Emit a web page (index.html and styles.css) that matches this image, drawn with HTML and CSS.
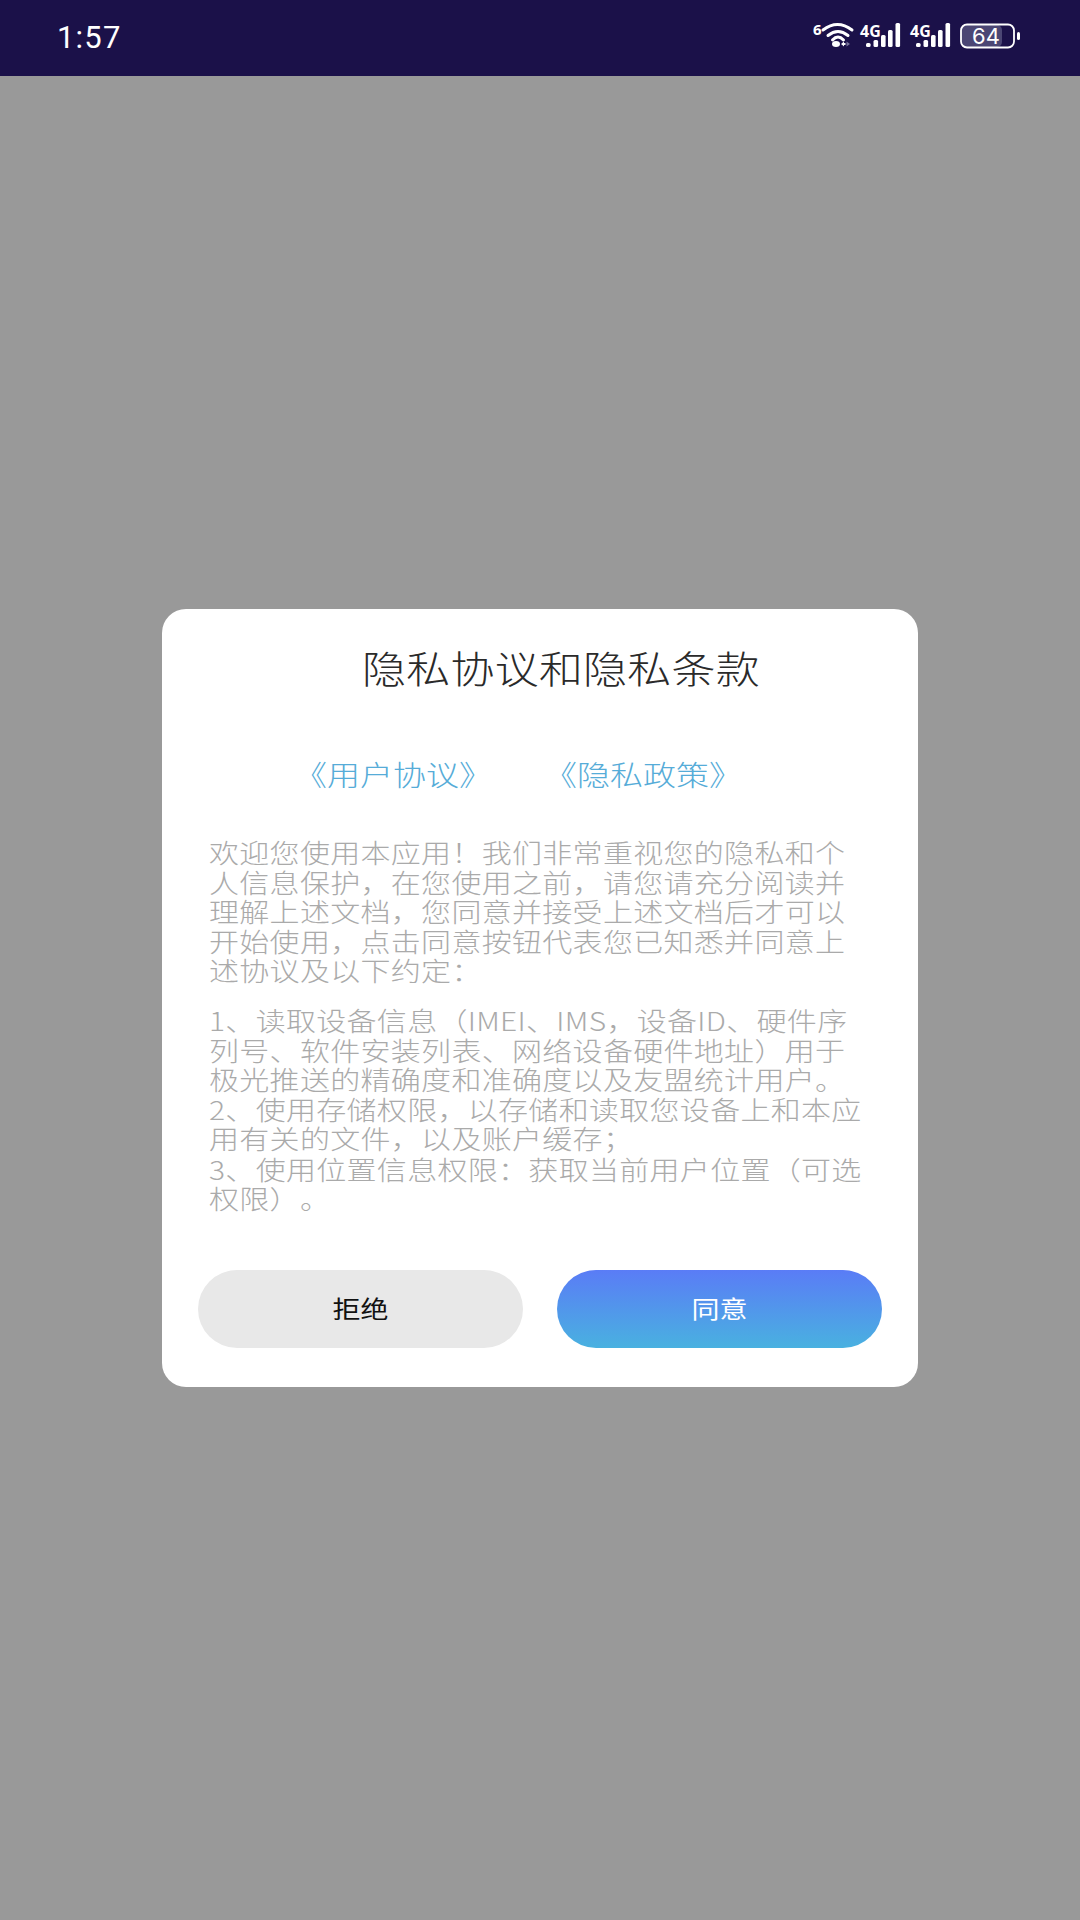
FILE: index.html
```html
<!DOCTYPE html>
<html lang="zh-CN">
<head>
<meta charset="utf-8">
<title>隐私协议和隐私条款</title>
<link rel="stylesheet" href="styles.css">
</head>
<body>
<div class="screen">
  <header class="status">
    <span class="time">1:57</span>
    <svg class="status-icons" width="208" height="40" viewBox="0 -6 208 40">
      <text class="t6" x="0" y="13">6</text>
      <g class="arc">
        <path d="M10 8Q24.500 -3 39 8"/>
        <path d="M15 13.500Q25 5.500 35 13.500"/>
        <path d="M19.500 18Q25 12 30.500 18"/>
      </g>
      <ellipse class="w" cx="23" cy="22" rx="4" ry="3"/>
      <path class="w" d="M28 22l3-2.500v1.500h1.500v2h-1.500v1.500z"/>
      <path class="dim" d="M33.500 19.500l3.500 2.500-3.500 2.500z"/>
      <g>
        <text class="t4g" x="47" y="15">4G</text>
        <rect class="w" x="53" y="21" width="4.600" height="4" rx="1.500"/>
        <rect class="w" x="60.500" y="18" width="4.600" height="7" rx="1.500"/>
        <rect class="w" x="68" y="13" width="4.600" height="12" rx="1.500"/>
        <rect class="w" x="75" y="8" width="4.600" height="17" rx="1.500"/>
        <rect class="w" x="82.500" y="1" width="4.600" height="24" rx="1.500"/>
      </g>
      <g transform="translate(50 0)">
        <text class="t4g" x="47" y="15">4G</text>
        <rect class="w" x="53" y="21" width="4.600" height="4" rx="1.500"/>
        <rect class="w" x="60.500" y="18" width="4.600" height="7" rx="1.500"/>
        <rect class="w" x="68" y="13" width="4.600" height="12" rx="1.500"/>
        <rect class="w" x="75" y="8" width="4.600" height="17" rx="1.500"/>
        <rect class="w" x="82.500" y="1" width="4.600" height="24" rx="1.500"/>
      </g>
      <rect class="batt-fill" x="148" y="3" width="41" height="22" rx="5"/>
      <rect class="batt" x="148" y="2.500" width="53" height="23" rx="6"/>
      <text class="t64" x="173" y="22">64</text>
      <rect class="w" x="204" y="10" width="3" height="8" rx="1.500"/>
    </svg>
  </header>
  <main class="stage">
    <section class="card">
      <h1 class="title">隐私协议和隐私条款</h1>
      <nav class="links"><a class="link">《用户协议》</a><a class="link">《隐私政策》</a></nav>
      <p class="para first">欢迎您使用本应用！我们非常重视您的隐私和个<br>人信息保护，在您使用之前，请您请充分阅读并<br>理解上述文档，您同意并接受上述文档后才可以<br>开始使用，点击同意按钮代表您已知悉并同意上<br>述协议及以下约定：</p>
      <p class="para second">1、读取设备信息（IMEI、IMS，设备ID、硬件序<br>列号、软件安装列表、网络设备硬件地址）用于<br>极光推送的精确度和准确度以及友盟统计用户。<br>2、使用存储权限，以存储和读取您设备上和本应<br>用有关的文件，以及账户缓存；<br>3、使用位置信息权限：获取当前用户位置（可选<br>权限）。</p>
      <div class="actions">
        <button class="btn reject"><span class="btn-label">拒绝</span></button>
        <button class="btn agree"><span class="btn-label">同意</span></button>
      </div>
    </section>
  </main>
</div>
</body>
</html>
```
FILE: styles.css
```css
* { box-sizing: border-box; margin: 0; padding: 0; }
html, body { width: 1080px; height: 1920px; overflow: hidden; }
body { font-family: "Noto Sans CJK SC", "Noto Sans", sans-serif; background: #999; text-spacing-trim: space-all; }
.screen { display: flex; flex-direction: column; height: 1920px; }
.status {
  height: 76px; flex: none; background: #1b1149; color: #fff;
  display: flex; align-items: center; justify-content: space-between;
  padding: 0 59px 0 57px;
}
.time { font: 400 31px "Roboto", sans-serif; letter-spacing: 1.200px; margin-top: -2px; }
.status-icons { display: block; margin-top: -4px; }
.w { fill: #fff; }
.dim { fill: #77739a; }
.arc path { fill: none; stroke: #fff; stroke-width: 3; stroke-linecap: round; }
.t6 { font: 700 15px "Noto Sans", sans-serif; fill: #fff; }
.t4g { font: 700 16px "Noto Sans", sans-serif; fill: #fff; }
.t64 { font: 400 22px "Inter", sans-serif; fill: #fff; text-anchor: middle; }
.batt { fill: none; stroke: #fff; stroke-width: 1.800; }
.batt-fill { fill: #4b4674; }

.stage { flex: 1; display: flex; align-items: center; justify-content: center; background: #999; }
.card {
  width: 756px; height: 778px; background: #fff; border-radius: 24px;
  padding: 30px 36px 39px 47px; display: flex; flex-direction: column;
}
.title { font-weight: 300; font-size: 44px; line-height: 56px; letter-spacing: 0.200px; color: #2a2a2a; text-align: center; padding-left: 31px; white-space: nowrap; transform: scaleY(.86); }
.links { display: flex; gap: 52px; margin: 57px 0 0 85px; font-size: 33px; line-height: 44px; font-weight: 300; color: #56acd8; transform: scaleY(.86); }
.para { font-size: 30px; line-height: 34.550px; font-weight: 300; color: #aaa; white-space: nowrap; letter-spacing: 0.300px; transform: scaleY(.86); transform-origin: left top; }
.first { margin: 41px 0 -24.200px; }
.second { margin: 19.500px 0 0; }
.actions { margin: auto 0 0 -11px; display: flex; justify-content: space-between; }
.btn {
  width: 325px; height: 78px; border: 0; border-radius: 39px; padding-bottom: 3px;
  font-family: inherit; font-size: 28px; font-weight: 400;
}
.btn-label { display: inline-block; transform: scaleY(.86); }
.reject { background: #e8e8e8; color: #111; }
.agree { background: linear-gradient(180deg, #5a7cf6, #49b1e0); color: #fff; }
```
